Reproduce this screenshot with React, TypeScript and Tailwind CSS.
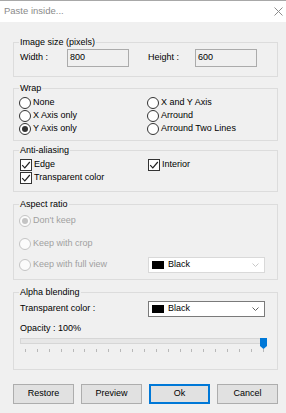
import React from 'react';

const cx = (...c: (string | false | undefined)[]) => c.filter(Boolean).join(' ');

const Radio: React.FC<{ checked?: boolean; disabled?: boolean; label: string }> = ({ checked, disabled, label }) => (
  <div className="flex items-center h-full">
    <span
      className={cx(
        'w-[12px] h-[12px] rounded-full border flex items-center justify-center shrink-0',
        disabled ? 'border-[#c4c4c4] bg-[#fbfbfb]' : 'border-[#333333] bg-white'
      )}
    >
      {checked && <span className={cx('w-[6px] h-[6px] rounded-full', disabled ? 'bg-[#c4c4c4]' : 'bg-[#333333]')} />}
    </span>
    <span className={cx('ml-[2px]', disabled ? 'text-[#a0a0a0]' : 'text-black')}>{label}</span>
  </div>
);

const Check: React.FC<{ label: string }> = ({ label }) => (
  <div className="flex items-center h-full pl-px">
    <span className="w-[12px] h-[12px] border border-[#333333] bg-white flex items-center justify-center shrink-0">
      <svg width="10" height="10" viewBox="0 0 10 10">
        <path d="M1.2 5.2 L3.8 7.8 L8.8 2" fill="none" stroke="#222" strokeWidth="1.2" />
      </svg>
    </span>
    <span className="ml-[2px]">{label}</span>
  </div>
);

const Dropdown: React.FC<{ disabled?: boolean }> = ({ disabled }) => (
  <div
    className={cx(
      'w-[117px] h-[16px] bg-white border flex items-center pl-[3px] pr-[5px]',
      disabled ? 'border-[#d9d9d9]' : 'border-[#7a7a7a]'
    )}
  >
    <span className="w-[12px] h-[8px] bg-black shrink-0" />
    <span className="ml-[4px] flex-1 text-black">Black</span>
    <svg width="7" height="4" viewBox="0 0 7 4">
      <path d="M0.5 0.5 L3.5 3.5 L6.5 0.5" fill="none" stroke={disabled ? '#c8c8c8' : '#606060'} strokeWidth="1" />
    </svg>
  </div>
);

const Group: React.FC<{ title: string; className?: string; children: React.ReactNode }> = ({ title, className, children }) => (
  <fieldset className={cx('border border-[#dcdcdc] px-[5px] min-w-0', className)}>
    <legend className="px-px leading-[16px]">{title}</legend>
    {children}
  </fieldset>
);

const Button: React.FC<{ label: string; primary?: boolean }> = ({ label, primary }) => (
  <div
    className={cx(
      'h-[20px] bg-[#e1e1e1] border flex items-center justify-center',
      primary ? 'border-[#0078d7] shadow-[inset_0_0_0_1px_#0078d7]' : 'border-[#adadad]'
    )}
  >
    {label}
  </div>
);

export default function App() {
  const ticks = Array.from({ length: 21 }, (_, i) => i);
  return (
    <div className="w-[286px] h-[413px] bg-[#f0f0f0] border-t border-[#a8a8a8] font-['Liberation_Sans',Arial,sans-serif] text-[9px] text-black overflow-hidden">
      <div className="h-[21px] bg-white flex items-center justify-between pl-[4px] pr-[2px]">
        <span className="text-[9.5px] text-[#8a8a8a]">Paste inside...</span>
        <svg width="9" height="9" viewBox="0 0 9 9" className="mr-px">
          <path d="M0.5 0.5 L8.5 8.5 M8.5 0.5 L0.5 8.5" stroke="#8c8c8c" strokeWidth="1" />
        </svg>
      </div>

      <div className="pl-[13px] pr-[8px] pt-[12px]">
        <Group title="Image size (pixels)" className="pb-[9px]">
          <div className="flex items-center h-[18px] -mt-px pl-px">
            <span className="w-[47px]">Width :</span>
            <div className="w-[62px] h-[18px] border border-[#ababab] bg-[#f0f0f0] flex items-center pl-[2px]">800</div>
            <span className="ml-[19px] w-[47px]">Height :</span>
            <div className="w-[62px] h-[18px] border border-[#ababab] bg-[#f0f0f0] flex items-center pl-[2px]">600</div>
          </div>
        </Group>

        <Group title="Wrap" className="mt-[3px] pb-[5px]">
          <div className="grid grid-cols-[128px_1fr] auto-rows-[13px]">
            <Radio label="None" />
            <Radio label="X and Y Axis" />
            <Radio label="X Axis only" />
            <Radio label="Arround" />
            <Radio label="Y Axis only" checked />
            <Radio label="Arround Two Lines" />
          </div>
        </Group>

        <Group title="Anti-aliasing" className="mt-px pb-[7px]">
          <div className="grid grid-cols-[128px_1fr] auto-rows-[13px]">
            <Check label="Edge" />
            <Check label="Interior" />
            <Check label="Transparent color" />
          </div>
        </Group>

        <Group title="Aspect ratio" className="mt-[4px] pb-[6px] text-black">
          <div className="flex flex-col">
            <div className="h-[18px]">
              <Radio label="Don't keep" checked disabled />
            </div>
            <div className="h-[18px] mt-[5px]">
              <Radio label="Keep with crop" disabled />
            </div>
            <div className="h-[16px] mt-[4px] flex items-center">
              <div className="w-[129px] h-full">
                <Radio label="Keep with full view" disabled />
              </div>
              <Dropdown disabled />
            </div>
          </div>
        </Group>

        <Group title="Alpha blending" className="mt-[4px] pb-[15px]">
          <div className="flex items-center h-[16px] mt-px pl-px">
            <span className="w-[128px]">Transparent color :</span>
            <Dropdown />
          </div>
          <div className="h-[16px] mt-[4px] flex items-center pl-px">Opacity : 100%</div>
          <div className="relative ml-px w-[247px] h-[16px]">
            <div className="mt-px h-[6px] border border-[#d6d6d6] bg-[#e7e7e7]" />
            <div className="flex justify-between pl-[5px] pr-[3px] mt-[5px]">
              {ticks.map((t) => (
                <span key={t} className="w-px h-[3px] bg-[#b8b8b8]" />
              ))}
            </div>
            <svg width="7" height="11" viewBox="0 0 7 11" className="absolute left-[240px] top-0">
              <path d="M0 0 H7 V8 L3.5 11 L0 8 Z" fill="#0078d7" />
            </svg>
          </div>
        </Group>

        <div className="grid grid-cols-4 gap-[7px] mt-[14px]">
          <Button label="Restore" />
          <Button label="Preview" />
          <Button label="Ok" primary />
          <Button label="Cancel" />
        </div>
      </div>
    </div>
  );
}
